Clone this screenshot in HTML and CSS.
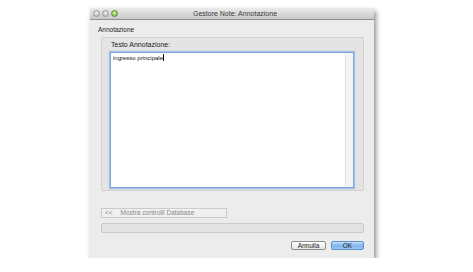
FILE: index.html
```html
<!DOCTYPE html>
<html lang="it">
	<head>
		<meta charset="UTF-8" />
		<title>Gestore Note: Annotazione</title>
		<link rel="stylesheet" href="styles.css">
	</head>
	<body>
		<div class="window">
			<div class="titlebar">
				<div class="lights">
					<span class="light"></span>
					<span class="light"></span>
					<span class="light green"></span>
				</div>
				<div class="title">Gestore Note: Annotazione</div>
			</div>

			<div class="content">
				<div class="section-label">Annotazione</div>

				<!-- Annotation group -->
				<div class="group">
					<div class="field-label">Testo Annotazione:</div>
					<div class="text-area">
						<div class="text-value">ingresso principale<span class="caret"></span></div>
						<div class="scroll-track"></div>
					</div>
				</div>

				<div class="db-btn"><span class="arrows">&lt;&lt;</span>Mostra controlli Database</div>
				<div class="progress"></div>

				<div class="actions">
					<button class="btn">Annulla</button>
					<button class="btn primary">OK</button>
				</div>
			</div>
		</div>
	</body>
</html>
```

FILE: styles.css
```css
body {
	margin: 0;
	background-color: #fff;
	font-family: 'Liberation Sans', Arial, sans-serif;
	font-size: 7px;
	color: #222;
}

.window {
	margin: 8px 0 0 90px;
	width: 284px;
	height: 250px;
	background-color: #ececec;
	box-shadow: 2px 3px 5px rgba(0, 0, 0, 0.45);
	display: flex;
	flex-direction: column;
}

.titlebar {
	height: 11px;
	display: flex;
	align-items: center;
	background: linear-gradient(#ebebeb, #c9c9c9);
	border-bottom: 1px solid #8f8f8f;
}

.lights {
	display: flex;
	gap: 2px;
	padding-left: 3px;
}

.light {
	width: 5px;
	height: 5px;
	border-radius: 50%;
	background: radial-gradient(circle at 50% 35%, #f0f0f0, #b0b0b0);
	border: 0.5px solid #9a9a9a;
}

.light.green {
	background: radial-gradient(circle at 50% 35%, #d6f3a0, #6bb23a);
	border-color: #5a8c36;
}

.title {
	flex: 1;
	text-align: center;
	padding-right: 22px;
	color: #3a3a3a;
	font-size: 7px;
}

.content {
	flex: 1;
	display: flex;
	flex-direction: column;
	padding: 0 10px 0 11px;
}

.section-label {
	margin: 6px 0 3px -3px;
	height: 8px;
	line-height: 8px;
	font-size: 6.5px;
	color: #222;
}

.group {
	height: 147px;
	background-color: #e4e4e4;
	border: 1px solid #d2d2d2;
	border-radius: 2px;
	padding: 3px 9px 2px 8px;
	display: flex;
	flex-direction: column;
}

.field-label {
	height: 8px;
	line-height: 8px;
	margin: 0 0 3px 1px;
	font-size: 7px;
	color: #222;
}

.text-area {
	flex: 1;
	display: flex;
	background-color: #fff;
	border: 1px solid #79a6e2;
	box-shadow: 0 0 1px 1px rgba(121, 166, 226, 0.55);
}

.text-value {
	flex: 1;
	padding: 1px 2px;
	line-height: 8px;
	font-size: 6px;
	color: #111;
}

.caret {
	display: inline-block;
	width: 1px;
	height: 7px;
	background-color: #000;
	vertical-align: -1px;
}

.scroll-track {
	width: 7px;
	background-color: #f4f4f4;
	border-left: 1px solid #e2e2e2;
}

.db-btn {
	margin-top: 17px;
	width: 121px;
	height: 8px;
	line-height: 8px;
	background-color: #f0f0f0;
	border: 1px solid #cbcbcb;
	color: #8a8a8a;
	font-size: 6.5px;
	padding-left: 3px;
}

.arrows {
	margin-right: 8px;
}

.progress {
	margin-top: 5px;
	height: 8px;
	background-color: #e3e3e3;
	border: 1px solid #cacaca;
	border-radius: 2px;
}

.actions {
	display: flex;
	justify-content: flex-end;
	gap: 5px;
	margin-top: 8px;
}

.btn {
	height: 9px;
	padding: 0;
	width: 35px;
	font-family: inherit;
	font-size: 6.5px;
	line-height: 7px;
	color: #222;
	background: linear-gradient(#ffffff, #e6e6e6);
	border: 1px solid #8e8e8e;
	border-radius: 2px;
}

.btn.primary {
	width: 33px;
	background: linear-gradient(#c7e0f8, #7fb4ea 55%, #9cc8f2);
	border-color: #5d8fcd;
}
```
